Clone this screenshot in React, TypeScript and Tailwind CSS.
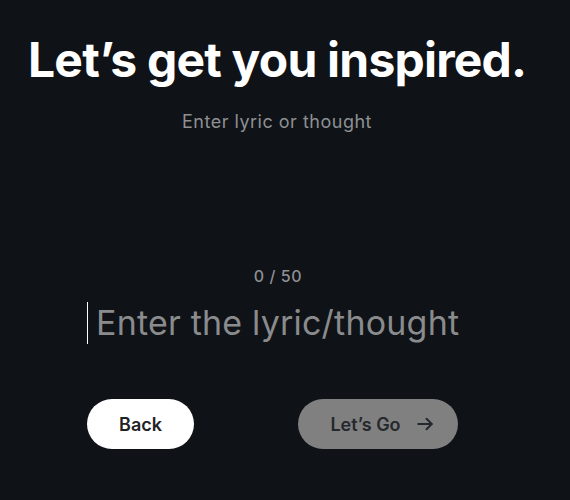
import React, { useState } from 'react';

const font = { fontFamily: 'Inter, "Noto Sans", sans-serif' };

export default function App() {
    const [text, setText] = useState('');

    return (
        <div className="w-[570px] h-[500px] bg-[#0f1216] flex flex-col" style={font}>
            <h1 className="mt-[30px] ml-[28px] text-[48px] leading-[60px] font-bold text-white tracking-[-0.8px]">
                Let’s get you inspired.
            </h1>
            <p className="mt-[20px] text-center text-[18px] leading-6 text-[#8e9094] tracking-[0.5px] pr-[16px]">
                Enter lyric or thought
            </p>

            <div className="mt-[132px] text-center text-[16px] leading-5 font-medium text-[#8e9094] tracking-[0.6px] pr-[14px]">
                {text.length} / 50
            </div>

            <div className="mt-[16px] ml-[87px] flex items-center h-[42px]">
                <div className="w-px h-[42px] bg-white" />
                <input
                    type="text"
                    value={text}
                    maxLength={50}
                    onChange={(e) => setText(e.target.value)}
                    placeholder="Enter the lyric/thought"
                    className="ml-[8px] w-[440px] h-[42px] bg-transparent text-[34px] leading-[42px] tracking-[0.2px] text-white placeholder-[#8a8b8d] outline-none"
                />
            </div>

            <div className="mt-[55px] ml-[87px] flex items-center gap-[104px]">
                <button className="w-[107px] h-[50px] rounded-full bg-white text-[#1f2328] text-[18px] font-semibold">
                    Back
                </button>
                <button className="w-[160px] h-[50px] rounded-full bg-[#808080] text-[#25282c] text-[18px] font-semibold flex items-center justify-center gap-[15px] pl-[8px]">
                    Let’s Go
                    <svg width="18" height="18" viewBox="0 0 24 24" fill="none" stroke="currentColor" strokeWidth="2.6" strokeLinecap="round" strokeLinejoin="round">
                        <path d="M3 12h18" />
                        <path d="M14 5l7 7-7 7" />
                    </svg>
                </button>
            </div>
        </div>
    );
}
